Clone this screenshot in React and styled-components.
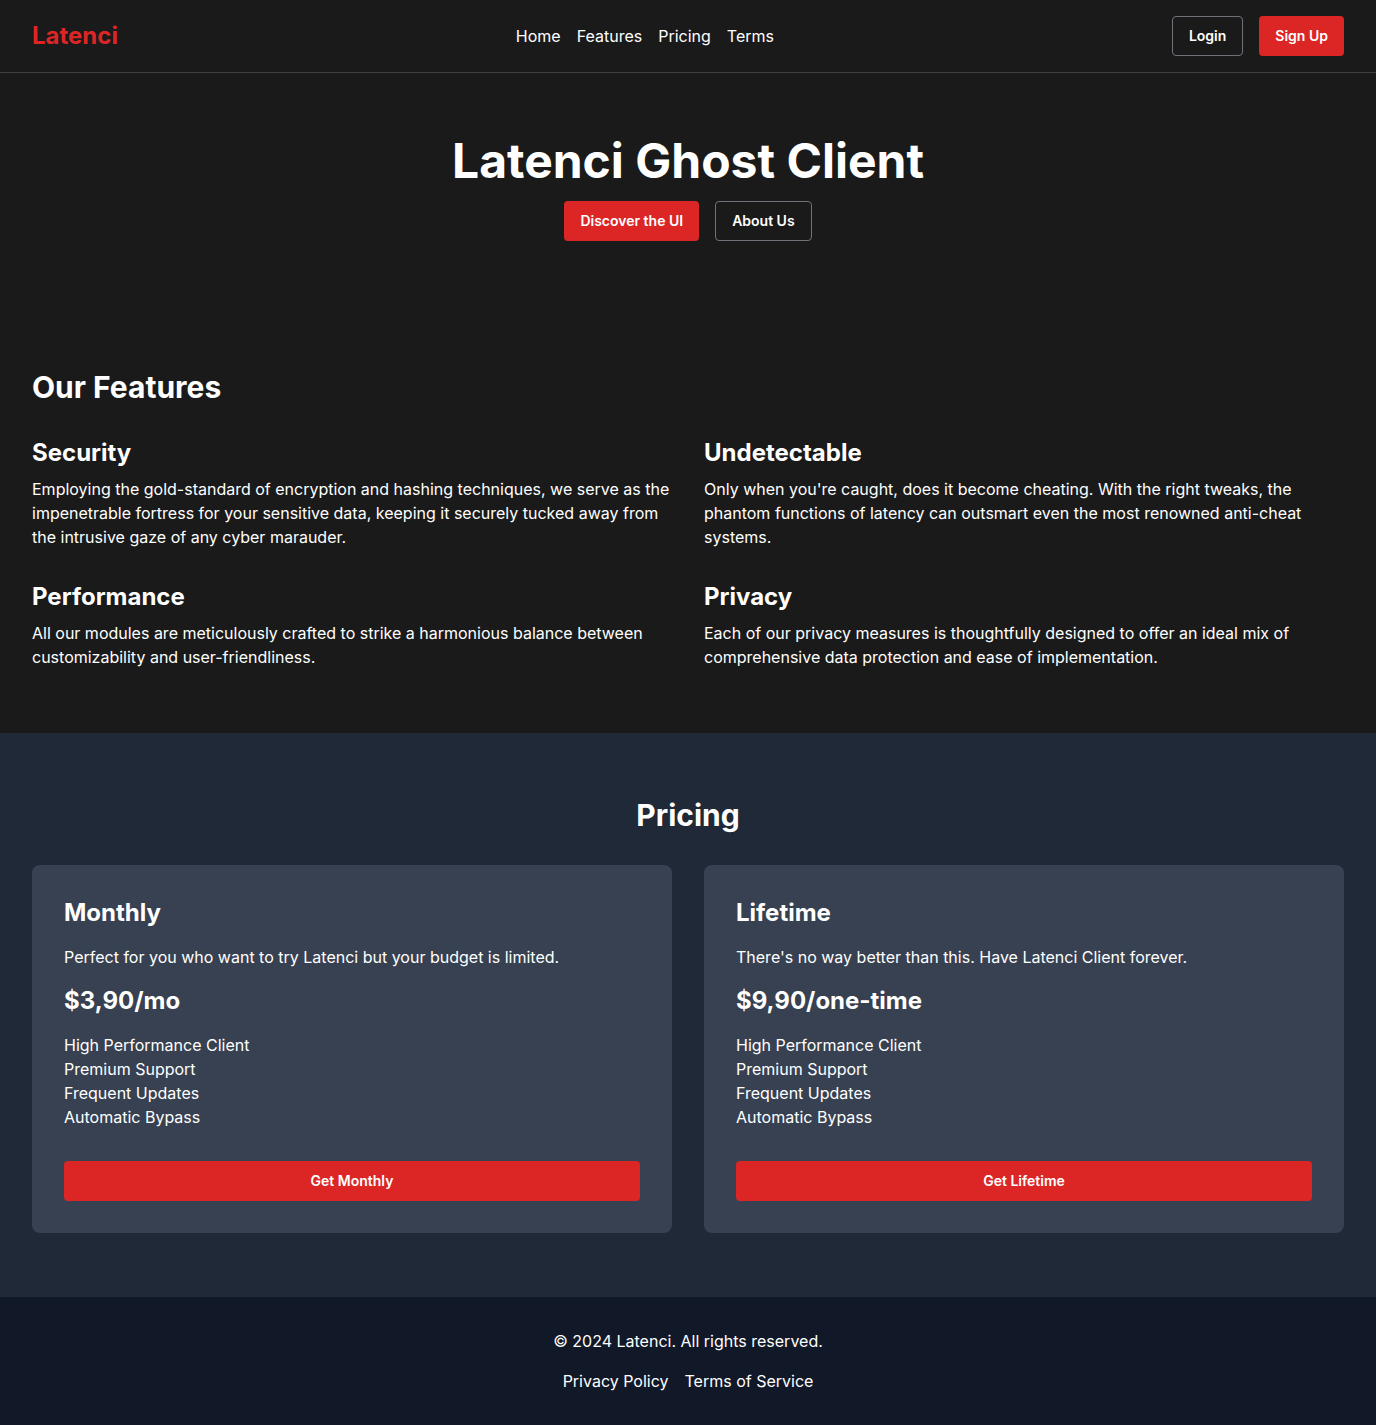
import React from "react";
import styled, { createGlobalStyle } from "styled-components";

const GlobalStyle = createGlobalStyle`
  *, *::before, *::after { box-sizing: border-box; }
  body {
    margin: 0;
    background: #1a1a1a;
    color: #fff;
    font-family: Inter, "Liberation Sans", sans-serif;
    font-size: 16px;
    line-height: 24px;
  }
  h1, h2, h3, p, ul { margin: 0; padding: 0; }
  ul { list-style: none; }
`;

const Header = styled.header`
  display: flex;
  align-items: center;
  justify-content: space-between;
  padding: 16px 32px;
  border-bottom: 1px solid #3f3f46;
`;

const Brand = styled.div`
  color: #dc2626;
  font-size: 24px;
  line-height: 32px;
  font-weight: 700;
`;

const LinkRow = styled.nav`
  display: flex;
  justify-content: center;
  gap: 16px;
`;

const TextLink = styled.a`
  color: inherit;
  text-decoration: none;
`;

const Actions = styled.div`
  display: flex;
  justify-content: center;
  gap: 16px;
`;

const Button = styled.button`
  height: 40px;
  padding: 0 16px;
  width: ${({ $block }) => ($block ? "100%" : "auto")};
  border: ${({ $outline }) => ($outline ? "1px solid #71717a" : "0")};
  border-radius: 4px;
  background: ${({ $outline }) => ($outline ? "transparent" : "#dc2626")};
  color: #fff;
  font-family: inherit;
  font-size: 14px;
  line-height: 20px;
  font-weight: 600;
  cursor: pointer;
`;

const Hero = styled.section`
  padding: 64px 32px;
  text-align: center;
`;

const HeroTitle = styled.h1`
  margin-bottom: 16px;
  font-size: 48px;
  line-height: 48px;
  font-weight: 700;
`;

const Section = styled.section`
  padding: 64px 32px;
  background: ${({ $background }) => $background || "transparent"};
`;

const SectionTitle = styled.h2`
  margin-bottom: 32px;
  font-size: 30px;
  line-height: 36px;
  font-weight: 700;
  text-align: ${({ $align }) => $align || "left"};
`;

const Grid = styled.div`
  display: grid;
  grid-template-columns: repeat(2, minmax(0, 1fr));
  gap: 32px;

  @media (max-width: 767px) {
    grid-template-columns: 1fr;
  }
`;

const Heading = styled.h3`
  && { margin-bottom: ${({ $space }) => $space}px; }
  font-size: 24px;
  line-height: 32px;
  font-weight: 700;
`;

const Card = styled.article`
  padding: 32px;
  border-radius: 8px;
  background: #374151;
`;

const Description = styled.p`
  margin-bottom: 16px;
`;

const Price = styled.p`
  margin-bottom: 16px;
  font-size: 24px;
  line-height: 32px;
  font-weight: 700;
`;

const PerkList = styled.ul`
  && { margin-bottom: 32px; }
`;

const Footer = styled.footer`
  padding: 32px;
  background: #111827;
  text-align: center;
`;

const features = [
  ["Security", "Employing the gold-standard of encryption and hashing techniques, we serve as the impenetrable fortress for your sensitive data, keeping it securely tucked away from the intrusive gaze of any cyber marauder."],
  ["Undetectable", "Only when you're caught, does it become cheating. With the right tweaks, the phantom functions of latency can outsmart even the most renowned anti-cheat systems."],
  ["Performance", "All our modules are meticulously crafted to strike a harmonious balance between customizability and user-friendliness."],
  ["Privacy", "Each of our privacy measures is thoughtfully designed to offer an ideal mix of comprehensive data protection and ease of implementation."],
];

const plans = [
  { name: "Monthly", description: "Perfect for you who want to try Latenci but your budget is limited.", price: "$3,90/mo" },
  { name: "Lifetime", description: "There's no way better than this. Have Latenci Client forever.", price: "$9,90/one-time" },
];

const perks = ["High Performance Client", "Premium Support", "Frequent Updates", "Automatic Bypass"];

export default function App() {
  return (
    <>
      <GlobalStyle />
      <Header>
        <Brand>Latenci</Brand>
        <LinkRow aria-label="Main">
          {["Home", "Features", "Pricing", "Terms"].map((label) => (
            <TextLink key={label} href={`#${label.toLowerCase()}`}>{label}</TextLink>
          ))}
        </LinkRow>
        <Actions>
          <Button type="button" $outline>Login</Button>
          <Button type="button">Sign Up</Button>
        </Actions>
      </Header>
      <main>
        <Hero id="home">
          <HeroTitle>Latenci Ghost Client</HeroTitle>
          <Actions>
            <Button type="button">Discover the UI</Button>
            <Button type="button" $outline>About Us</Button>
          </Actions>
        </Hero>
        <Section id="features">
          <SectionTitle>Our Features</SectionTitle>
          <Grid>
            {features.map(([title, text]) => (
              <article key={title}>
                <Heading $space={8}>{title}</Heading>
                <p>{text}</p>
              </article>
            ))}
          </Grid>
        </Section>
        <Section id="pricing" $background="#1f2937">
          <SectionTitle $align="center">Pricing</SectionTitle>
          <Grid>
            {plans.map((plan) => (
              <Card key={plan.name}>
                <Heading $space={16}>{plan.name}</Heading>
                <Description>{plan.description}</Description>
                <Price>{plan.price}</Price>
                <PerkList>
                  {perks.map((perk) => <li key={perk}>{perk}</li>)}
                </PerkList>
                <Button type="button" $block>Get {plan.name}</Button>
              </Card>
            ))}
          </Grid>
        </Section>
      </main>
      <Footer id="terms">
        <Description>© 2024 Latenci. All rights reserved.</Description>
        <LinkRow aria-label="Legal">
          <TextLink href="#privacy-policy">Privacy Policy</TextLink>
          <TextLink href="#terms-of-service">Terms of Service</TextLink>
        </LinkRow>
      </Footer>
    </>
  );
}
